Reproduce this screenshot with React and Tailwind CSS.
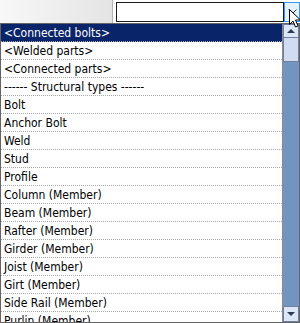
import React from "react";

const items = [
  "<Connected bolts>",
  "<Welded parts>",
  "<Connected parts>",
  "------ Structural types ------",
  "Bolt",
  "Anchor Bolt",
  "Weld",
  "Stud",
  "Profile",
  "Column (Member)",
  "Beam (Member)",
  "Rafter (Member)",
  "Girder (Member)",
  "Joist (Member)",
  "Girt (Member)",
  "Side Rail (Member)",
  "Purlin (Member)",
];

function Cursor() {
  return (
    <svg className="absolute left-[289px] top-[9px]" width="12" height="19" viewBox="0 0 12 19">
      <path d="M0.5 0.5 L0.5 15.5 L4 12 L6.5 18 L9 17 L6.5 11 L11.5 11 Z" fill="white" stroke="black" strokeWidth="1" />
    </svg>
  );
}

export default function App() {
  return (
    <div className="relative w-[300px] h-[323px] overflow-hidden bg-white font-['DejaVu_Sans_Condensed','DejaVu_Sans',sans-serif] text-[12px] text-black">
      {/* toolbar strip */}
      <div className="flex h-[23px]">
        <div className="w-[113px] bg-gradient-to-r from-[#f8f8f8] to-[#e4e4e4] border-r border-[#b4b4b4]" />
        <div className="flex-1 flex items-start pt-[2px] pl-[3px] bg-white">
          <div className="w-[168px] h-[20px] border border-[#1a1a1a] bg-white" />
          <div className="w-[16px] h-[20px] border border-[#3399ff] bg-[#e5f1fb] flex items-center justify-center">
            <svg width="9" height="6" viewBox="0 0 9 6">
              <path d="M0.5 0.5 L4.5 4.5 L8.5 0.5" fill="none" stroke="#333" strokeWidth="1" />
            </svg>
          </div>
        </div>
      </div>

      {/* dropdown list */}
      <div className="flex h-[300px] border border-[#646464]">
        <div className="flex-1 flex flex-col overflow-hidden border-r border-[#8a8a8a]">
          {items.map((t, i) => (
            <div
              key={i}
              className={`h-[18px] shrink-0 flex items-center px-[3px] whitespace-pre border-b border-dotted border-[#a8a8a8] ${
                i === 0 ? "bg-[#0a246a] text-white border-[#0a246a]" : ""
              }`}
            >
              {t}
            </div>
          ))}
        </div>
        <div className="w-[16px] flex flex-col bg-[#7494c0]">
          <div className="h-[14px] bg-[#dbe6f6] border border-[#6f7fa0] flex items-center justify-center">
            <svg width="8" height="4" viewBox="0 0 8 4">
              <path d="M0 4 L4 0 L8 4 Z" fill="#2c3a58" />
            </svg>
          </div>
          <div className="h-[24px] bg-[#cfdcf1] border-x border-b border-[#6f7fa0]" />
          <div className="flex-1" />
          <div className="h-[16px] bg-[#dbe6f6] border border-[#6f7fa0] flex items-center justify-center">
            <svg width="8" height="4" viewBox="0 0 8 4">
              <path d="M0 0 L8 0 L4 4 Z" fill="#2c3a58" />
            </svg>
          </div>
        </div>
      </div>

      <Cursor />
    </div>
  );
}
